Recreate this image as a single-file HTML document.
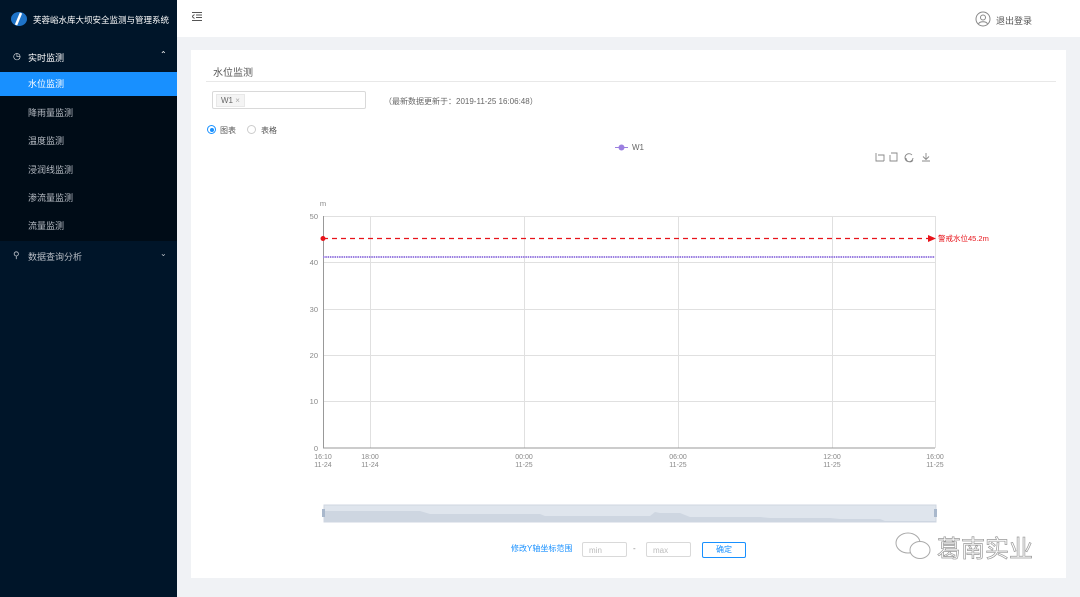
<!DOCTYPE html>
<html><head><meta charset="utf-8"><style>
*{margin:0;padding:0;box-sizing:border-box}
body{width:1080px;height:597px;overflow:hidden;background:#f0f2f5;font-family:"Liberation Sans","Noto Sans CJK SC",sans-serif;position:relative}
.side{position:absolute;left:0;top:0;width:177px;height:597px;background:#001529;color:#b8bec6;font-size:9px}
.sub{position:absolute;left:0;top:72px;width:177px;height:169px;background:#000c17}
.it{position:absolute;left:0;width:177px;height:24px;line-height:24px;padding-left:28px}
.hdr{position:absolute;left:177px;top:0;width:903px;height:37px;background:#fff}
.card{position:absolute;left:191px;top:50px;width:875px;height:528px;background:#fff}
.t{position:absolute;white-space:nowrap}
</style></head><body>
<div class="side">
<div class="sub"></div>
<svg class="t" style="left:10px;top:11px" width="18" height="16"><ellipse cx="9" cy="8" rx="8" ry="7" fill="#1e73c8"/><path d="M11 2 L6 14" stroke="#fff" stroke-width="2.5"/></svg>
<div class="t" style="left:33px;top:14px;color:#fff;font-size:8.5px">芙蓉峪水库大坝安全监测与管理系统</div>
<div class="t" style="left:13px;top:51px;color:#fff">◷</div>
<div class="t" style="left:28px;top:51px;color:#fff">实时监测</div>
<div class="t" style="left:160px;top:50px;color:#fff;font-size:8px">⌃</div>
<div class="it" style="top:72px;background:#1890ff;color:#fff">水位监测</div>
<div class="it" style="top:101px">降雨量监测</div>
<div class="it" style="top:129px">温度监测</div>
<div class="it" style="top:158px">浸润线监测</div>
<div class="it" style="top:186px">渗流量监测</div>
<div class="it" style="top:214px">流量监测</div>
<div class="t" style="left:13px;top:250px">⚲</div>
<div class="t" style="left:28px;top:250px">数据查询分析</div>
<div class="t" style="left:160px;top:249px;font-size:8px">⌄</div>
</div>
<div class="hdr">
<svg class="t" style="left:15px;top:12px" width="10" height="9"><path d="M0 .5H10M4 3H10M4 5.5H10M0 8.5H10M2.5 2.5L0 4.5L2.5 6.5" stroke="#555" fill="none" stroke-width="1"/></svg>
<svg class="t" style="left:798px;top:11px" width="16" height="16"><circle cx="8" cy="8" r="7" fill="none" stroke="#888"/><circle cx="8" cy="6.5" r="2.5" fill="none" stroke="#888"/><path d="M3.5 13c1-3 8-3 9 0" fill="none" stroke="#888"/></svg>
<div class="t" style="left:819px;top:14px;font-size:9px;color:#555">退出登录</div>
</div>
<div class="card">
<div class="t" style="left:22px;top:14px;font-size:10px;color:#555">水位监测</div>
<div style="position:absolute;left:15px;top:31px;width:850px;height:1px;background:#e8e8e8"></div>
<div style="position:absolute;left:21px;top:41px;width:154px;height:18px;border:1px solid #d9d9d9;border-radius:2px"></div>
<div class="t" style="left:25px;top:44px;height:13px;padding:0 4px;background:#f4f4f4;border:1px solid #e8e8e8;font-size:8px;color:#666;line-height:11px">W1 <span style="color:#aaa">×</span></div>
<div class="t" style="left:193px;top:46px;font-size:8px;color:#666">（最新数据更新于：2019-11-25 16:06:48）</div>
<div class="t" style="left:16px;top:75px;width:9px;height:9px;border:1px solid #1890ff;border-radius:50%"><div style="margin:1.5px;width:4px;height:4px;border-radius:50%;background:#1890ff"></div></div>
<div class="t" style="left:29px;top:75px;font-size:8px;color:#555">图表</div>
<div class="t" style="left:56px;top:75px;width:9px;height:9px;border:1px solid #ccc;border-radius:50%"></div>
<div class="t" style="left:70px;top:75px;font-size:8px;color:#555">表格</div>
<div class="t" style="left:320px;top:493px;font-size:8px;color:#1890ff">修改Y轴坐标范围</div>
<div class="t" style="left:391px;top:492px;width:45px;height:15px;border:1px solid #d9d9d9;border-radius:2px;font-size:8px;color:#bbb;padding:3px 6px">min</div>
<div class="t" style="left:442px;top:494px;font-size:8px;color:#888">-</div>
<div class="t" style="left:455px;top:492px;width:45px;height:15px;border:1px solid #d9d9d9;border-radius:2px;font-size:8px;color:#bbb;padding:3px 6px">max</div>
<div class="t" style="left:511px;top:492px;width:44px;height:16px;border:1px solid #1890ff;border-radius:2px;font-size:8px;color:#1890ff;text-align:center;line-height:14px">确定</div>
</div>
<svg class="t" style="left:0;top:0" width="1080" height="597" font-family="Liberation Sans,Noto Sans CJK SC,sans-serif">
<g stroke="#e0e0e0" stroke-width="1">
<path d="M323 216.5H935M323 262.5H935M323 309.5H935M323 355.5H935M323 401.5H935M370.5 216V448M524.5 216V448M678.5 216V448M832.5 216V448M935.5 216V448"/>
</g>
<path d="M323.5 216V448H935" stroke="#999" fill="none"/>
<g font-size="7.5" fill="#888" text-anchor="end">
<text x="318" y="219">50</text><text x="318" y="265">40</text><text x="318" y="312">30</text><text x="318" y="358">20</text><text x="318" y="404">10</text><text x="318" y="451">0</text>
<text x="323" y="206" text-anchor="middle">m</text>
</g>
<g font-size="7" fill="#888" text-anchor="middle">
<text x="323" y="459">16:10</text><text x="323" y="467">11-24</text>
<text x="370" y="459">18:00</text><text x="370" y="467">11-24</text>
<text x="524" y="459">00:00</text><text x="524" y="467">11-25</text>
<text x="678" y="459">06:00</text><text x="678" y="467">11-25</text>
<text x="832" y="459">12:00</text><text x="832" y="467">11-25</text>
<text x="935" y="459">16:00</text><text x="935" y="467">11-25</text>
</g>
<path d="M323 257H935" stroke="#9b7fe0" stroke-width="2" stroke-dasharray="1.5 .8"/>
<path d="M323 238.5H930" stroke="#e8131a" stroke-width="1.2" stroke-dasharray="5 4"/>
<circle cx="323" cy="238.5" r="2.5" fill="#e8131a"/>
<path d="M928 235L936 238.5L928 242Z" fill="#e8131a"/>
<text x="938" y="241" font-size="7.5" fill="#e8131a">警戒水位45.2m</text>
<path d="M615 147.5H628" stroke="#9b7fe0"/><circle cx="621.5" cy="147.5" r="3" fill="#9b7fe0"/>
<text x="632" y="150" font-size="8" fill="#666">W1</text>
<g stroke="#888" fill="none" stroke-width=".9">
<path d="M876 153v8h8M878 155h6v6"/><path d="M890 155v6h7v-8h-6"/><path d="M913 158a4 4 0 1 1-1-3M906 158a4 4 0 0 0 7 2.5"/><path d="M926 153v6M923 156.5l3 3 3-3M922 161h8"/>
</g>
<rect x="324" y="505" width="612" height="17" fill="#dfe5ed" stroke="#cfd6e0"/>
<path d="M324 511H420L430 514H540L545 516H650L655 512L660 513H680L690 517H760L770 518H830L840 519H880L885 521H936V522H324Z" fill="#ced6e1"/>
<rect x="322" y="509" width="3" height="8" fill="#a9b8cc"/><rect x="934" y="509" width="3" height="8" fill="#a9b8cc"/>
<g fill="#fff" stroke="#aaa" stroke-width="1">
<ellipse cx="908" cy="543" rx="12" ry="10"/><ellipse cx="920" cy="550" rx="10" ry="8.5"/>
</g>
<text x="937" y="557" font-size="24" fill="#fff" stroke="#999" stroke-width=".7">葛南实业</text>
</svg>
</body></html>
